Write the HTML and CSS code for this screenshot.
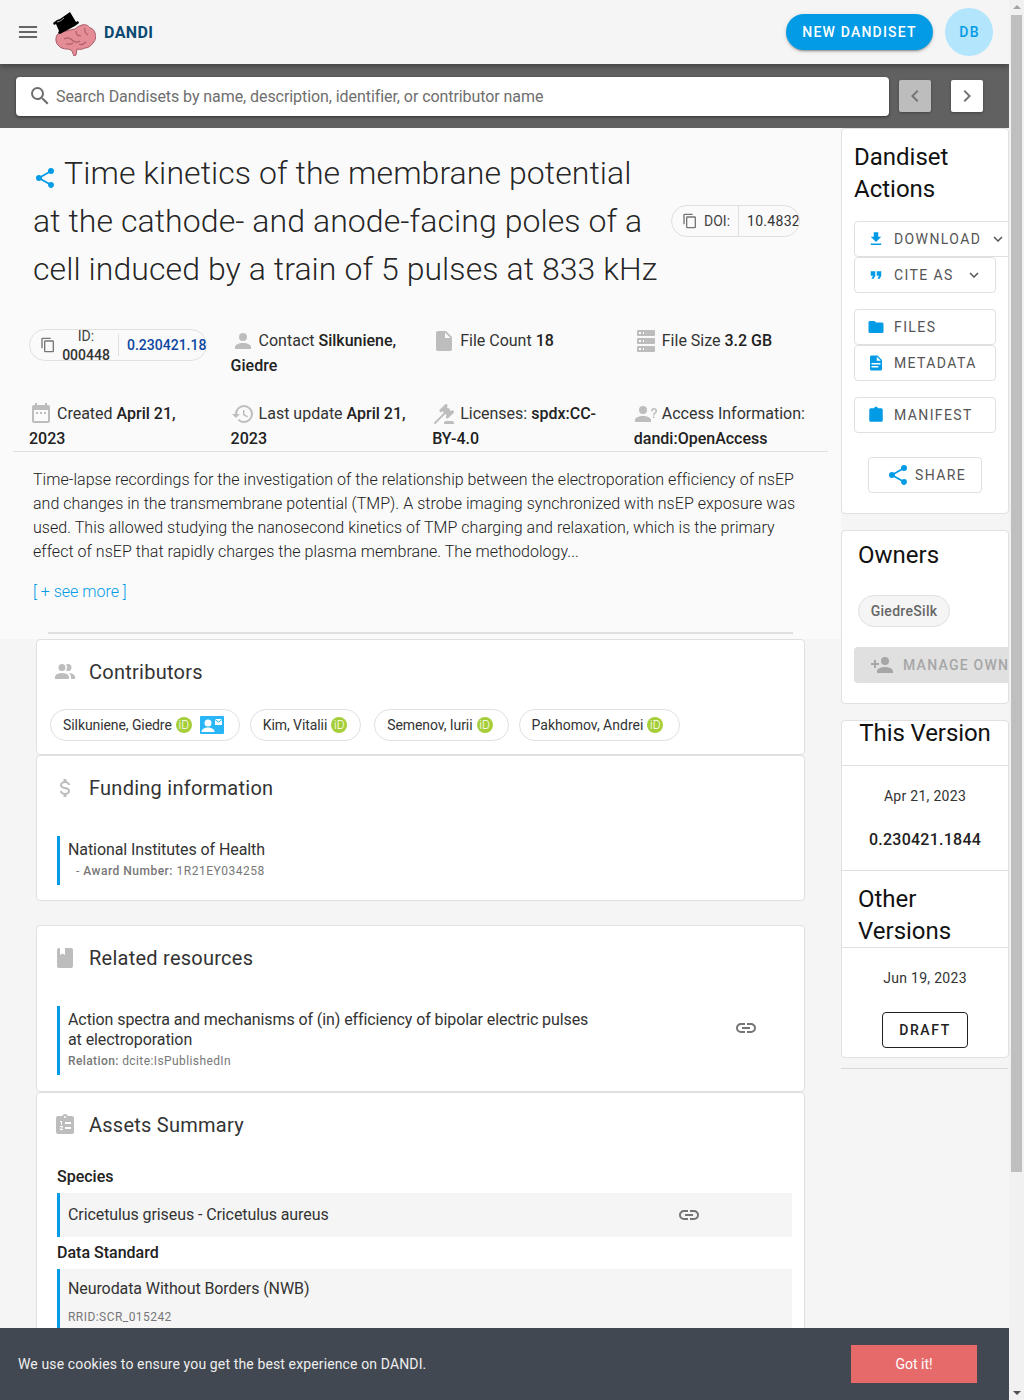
FILE: index.html
```html
<!DOCTYPE html>
<html lang="en">
<head>
  <meta charset="UTF-8" />
  <meta name="viewport" content="width=device-width, initial-scale=1.0" />
  <title>DANDI Archive</title>
  <link rel="stylesheet" href="styles.css">
</head>
<body>
  <!-- Shared icons -->
  <svg class="sprite" aria-hidden="true">
    <symbol id="i-menu" viewBox="0 0 24 24"><path d="M3,6H21V8H3V6M3,11H21V13H3V11M3,16H21V18H3V16Z"/></symbol>
    <symbol id="i-search" viewBox="0 0 24 24"><path d="M9.5,3A6.5,6.5 0 0,1 16,9.5C16,11.11 15.41,12.59 14.44,13.73L14.71,14H15.5L20.5,19L19,20.5L14,15.5V14.71L13.73,14.44C12.59,15.41 11.11,16 9.5,16A6.5,6.5 0 0,1 3,9.5A6.5,6.5 0 0,1 9.5,3M9.5,5C7,5 5,7 5,9.5C5,12 7,14 9.5,14C12,14 14,12 14,9.5C14,7 12,5 9.5,5Z"/></symbol>
    <symbol id="i-left" viewBox="0 0 24 24"><path d="M15.41,16.58L10.83,12L15.41,7.41L14,6L8,12L14,18L15.41,16.58Z"/></symbol>
    <symbol id="i-right" viewBox="0 0 24 24"><path d="M8.59,16.58L13.17,12L8.59,7.41L10,6L16,12L10,18L8.59,16.58Z"/></symbol>
    <symbol id="i-down" viewBox="0 0 24 24"><path d="M7.41,8.58L12,13.17L16.59,8.58L18,10L12,16L6,10L7.41,8.58Z"/></symbol>
    <symbol id="i-share" viewBox="0 0 24 24"><path d="M18,16.08C17.24,16.08 16.56,16.38 16.04,16.85L8.91,12.7C8.96,12.47 9,12.24 9,12C9,11.76 8.96,11.53 8.91,11.3L15.96,7.19C16.5,7.69 17.21,8 18,8A3,3 0 0,0 21,5A3,3 0 0,0 18,2A3,3 0 0,0 15,5C15,5.24 15.04,5.47 15.09,5.7L8.04,9.81C7.5,9.31 6.79,9 6,9A3,3 0 0,0 3,12A3,3 0 0,0 6,15C6.79,15 7.5,14.69 8.04,14.19L15.16,18.34C15.11,18.55 15.08,18.77 15.08,19C15.08,20.61 16.39,21.91 18,21.91C19.61,21.91 20.92,20.61 20.92,19A2.92,2.92 0 0,0 18,16.08Z"/></symbol>
    <symbol id="i-copy" viewBox="0 0 24 24"><path d="M19,21H8V7H19M19,5H8A2,2 0 0,0 6,7V21A2,2 0 0,0 8,23H19A2,2 0 0,0 21,21V7A2,2 0 0,0 19,5M16,1H4A2,2 0 0,0 2,3V17H4V3H16V1Z"/></symbol>
    <symbol id="i-account" viewBox="0 0 24 24"><path d="M12,4A4,4 0 0,1 16,8A4,4 0 0,1 12,12A4,4 0 0,1 8,8A4,4 0 0,1 12,4M12,14C16.42,14 20,15.79 20,18V20H4V18C4,15.79 7.58,14 12,14Z"/></symbol>
    <symbol id="i-file" viewBox="0 0 24 24"><path d="M13,9V3.5L18.5,9M6,2C4.89,2 4,2.89 4,4V20A2,2 0 0,0 6,22H18A2,2 0 0,0 20,20V8L14,2H6Z"/></symbol>
    <symbol id="i-server" viewBox="0 0 24 24"><path d="M4,1H20A1,1 0 0,1 21,2V6A1,1 0 0,1 20,7H4A1,1 0 0,1 3,6V2A1,1 0 0,1 4,1M4,9H20A1,1 0 0,1 21,10V14A1,1 0 0,1 20,15H4A1,1 0 0,1 3,14V10A1,1 0 0,1 4,9M4,17H20A1,1 0 0,1 21,18V22A1,1 0 0,1 20,23H4A1,1 0 0,1 3,22V18A1,1 0 0,1 4,17M9,5H10V3H9V5M9,13H10V11H9V13M9,21H10V19H9V21M5,3V5H7V3H5M5,11V13H7V11H5M5,19V21H7V19H5Z"/></symbol>
    <symbol id="i-calendar" viewBox="0 0 24 24"><path d="M9,10H7V12H9V10M13,10H11V12H13V10M17,10H15V12H17V10M19,3H18V1H16V3H8V1H6V3H5C3.89,3 3,3.9 3,5V19A2,2 0 0,0 5,21H19A2,2 0 0,0 21,19V5A2,2 0 0,0 19,3M19,19H5V8H19V19Z"/></symbol>
    <symbol id="i-history" viewBox="0 0 24 24"><path d="M13.5,8H12V13L16.28,15.54L17,14.33L13.5,12.25V8M13,3A9,9 0 0,0 4,12H1L4.96,16.03L9,12H6A7,7 0 0,1 13,5A7,7 0 0,1 20,12A7,7 0 0,1 13,19C11.07,19 9.32,18.21 8.06,16.94L6.64,18.36C8.27,20 10.5,21 13,21A9,9 0 0,0 22,12A9,9 0 0,0 13,3"/></symbol>
    <symbol id="i-gavel" viewBox="0 0 24 24"><path d="M2.3,20.28L11.9,10.68L10.5,9.26L9.78,9.97C9.39,10.36 8.76,10.36 8.37,9.97L7.66,9.26C7.27,8.87 7.27,8.24 7.66,7.85L13.32,2.19C13.71,1.8 14.34,1.8 14.73,2.19L15.44,2.9C15.83,3.29 15.83,3.92 15.44,4.31L14.73,5L16.15,6.43C16.54,6.04 17.17,6.04 17.56,6.43C17.95,6.82 17.95,7.46 17.56,7.85L18.97,9.26L19.68,8.55C20.07,8.16 20.71,8.16 21.1,8.55L21.8,9.26C22.19,9.65 22.19,10.29 21.8,10.68L16.15,16.33C15.76,16.72 15.12,16.72 14.73,16.33L14.03,15.63C13.63,15.24 13.63,14.6 14.03,14.21L14.73,13.5L13.32,12.09L3.71,21.7C3.32,22.09 2.69,22.09 2.3,21.7C1.91,21.31 1.91,20.67 2.3,20.28M20,19A2,2 0 0,1 22,21V22H12V21A2,2 0 0,1 14,19H20Z"/></symbol>
    <symbol id="i-access" viewBox="0 0 24 24"><path d="M13,8A4,4 0 0,1 9,12A4,4 0 0,1 5,8A4,4 0 0,1 9,4A4,4 0 0,1 13,8M17,18V20H1V18C1,15.79 4.58,14 9,14C13.42,14 17,15.79 17,18M20.5,14.5V16H19V14.5H20.5M18.5,9.5H17V9A3,3 0 0,1 20,6A3,3 0 0,1 23,9C23,9.97 22.5,10.88 21.71,11.41L21.41,11.6C20.84,12 20.5,12.61 20.5,13.3V13.5H19V13.3C19,12.11 19.6,11 20.59,10.35L20.88,10.16C21.27,9.9 21.5,9.47 21.5,9A1.5,1.5 0 0,0 20,7.5A1.5,1.5 0 0,0 18.5,9V9.5Z"/></symbol>
    <symbol id="i-people" viewBox="0 0 24 24"><path d="M16 17V19H2V17S2 13 9 13 16 17 16 17M12.5 7.5A3.5 3.5 0 1 0 9 11A3.5 3.5 0 0 0 12.5 7.5M15.94 13A5.32 5.32 0 0 1 18 17V19H22V17S22 13.37 15.94 13M15 4A3.39 3.39 0 0 0 13.07 4.59A5 5 0 0 1 13.07 10.41A3.39 3.39 0 0 0 15 11A3.5 3.5 0 0 0 15 4Z"/></symbol>
    <symbol id="i-dollar" viewBox="0 0 24 24"><path d="M7,15H9C9,16.08 10.37,17 12,17C13.63,17 15,16.08 15,15C15,13.9 13.96,13.5 11.76,12.97C9.64,12.44 7,11.78 7,9C7,7.21 8.47,5.69 10.5,5.18V3H13.5V5.18C15.53,5.69 17,7.21 17,9H15C15,7.92 13.63,7 12,7C10.37,7 9,7.92 9,9C9,10.1 10.04,10.5 12.24,11.03C14.36,11.56 17,12.22 17,15C17,16.79 15.53,18.31 13.5,18.82V21H10.5V18.82C8.47,18.31 7,16.79 7,15Z"/></symbol>
    <symbol id="i-book" viewBox="0 0 24 24"><path d="M18,22A2,2 0 0,0 20,20V4C20,2.89 19.1,2 18,2H12V9L9.5,7.5L7,9V2H6A2,2 0 0,0 4,4V20A2,2 0 0,0 6,22H18Z"/></symbol>
    <symbol id="i-assets" viewBox="0 0 24 24"><path fill-rule="evenodd" d="M19,3H14.82C14.4,1.84 13.3,1 12,1C10.7,1 9.6,1.84 9.18,3H5A2,2 0 0,0 3,5V19A2,2 0 0,0 5,21H19A2,2 0 0,0 21,19V5A2,2 0 0,0 19,3M12,3A1,1 0 0,1 13,4A1,1 0 0,1 12,5A1,1 0 0,1 11,4A1,1 0 0,1 12,3M12,9H18V11H12V9M12,14H18V16H12V14M7,8H9V12H8V9H7V8M7,13H10V14L8,16H10V17H7V16L9,14H7V13Z"/></symbol>
    <symbol id="i-download" viewBox="0 0 24 24"><path d="M5,20H19V18H5M19,9H15V3H9V9H5L12,16L19,9Z"/></symbol>
    <symbol id="i-quote" viewBox="0 0 24 24"><path d="M14,17H17L19,13V7H13V13H16M6,17H9L11,13V7H5V13H8L6,17Z"/></symbol>
    <symbol id="i-folder" viewBox="0 0 24 24"><path d="M10,4H4C2.89,4 2,4.89 2,6V18A2,2 0 0,0 4,20H20A2,2 0 0,0 22,18V8C22,6.89 21.1,6 20,6H12L10,4Z"/></symbol>
    <symbol id="i-doc" viewBox="0 0 24 24"><path d="M13,9H18.5L13,3.5V9M6,2H14L20,8V20A2,2 0 0,1 18,22H6C4.89,22 4,21.1 4,20V4C4,2.89 4.89,2 6,2M15,18V16H6V18H15M18,14V12H6V14H18Z"/></symbol>
    <symbol id="i-clip" viewBox="0 0 24 24"><path d="M19,3H14.82C14.4,1.84 13.3,1 12,1C10.7,1 9.6,1.84 9.18,3H5A2,2 0 0,0 3,5V19A2,2 0 0,0 5,21H19A2,2 0 0,0 21,19V5A2,2 0 0,0 19,3Z"/></symbol>
    <symbol id="i-addperson" viewBox="0 0 24 24"><path d="M15,14C12.33,14 7,15.33 7,18V20H23V18C23,15.33 17.67,14 15,14M6,10V7H4V10H1V12H4V15H6V12H9V10M15,12A4,4 0 0,0 19,8A4,4 0 0,0 15,4A4,4 0 0,0 11,8A4,4 0 0,0 15,12Z"/></symbol>
    <symbol id="i-link" viewBox="0 0 24 24"><path d="M3.9,12C3.9,10.29 5.29,8.9 7,8.9H11V7H7A5,5 0 0,0 2,12A5,5 0 0,0 7,17H11V15.1H7C5.29,15.1 3.9,13.71 3.9,12M8,13H16V11H8V13M17,7H13V8.9H17C18.71,8.9 20.1,10.29 20.1,12C20.1,13.71 18.71,15.1 17,15.1H13V17H17A5,5 0 0,0 22,12A5,5 0 0,0 17,7Z"/></symbol>
  </svg>

  <div class="page">
    <!-- Top bar -->
    <header class="app-bar">
      <svg class="icon menu-icon"><use href="#i-menu"/></svg>
      <svg class="logo" viewBox="0 0 44 44">
        <path fill="#e58d96" stroke="#a85a66" stroke-width="1" d="M14 19c-3 0-7 1-9 4-2 4-1 8 1 10 2 3 6 4 9 4 2 0 4 1 5 2l2 5 2-1 1-6c3 1 6 0 8-1 3 0 6-2 8-5 3-3 3-7 2-10-1-3-3-5-5-5-2-3-5-4-8-3-3 1-5 2-7 4l-9 2z"/>
        <path fill="none" stroke="#b0606c" stroke-width="1.2" d="M12 27c3-2 6-1 8 1s5 3 8 1M24 19c0 3 2 5 5 5M33 16c-1 3 0 5 3 7M14 32c3 0 5 1 7-1M27 32c2 1 5 0 7-2"/>
        <path fill="#000" d="M1 11l4-3 3-1 10-7 6 10 2-1 1 2-4 3-15 8-2-1 1-2-3-7-2 1z"/>
        <path fill="none" stroke="#ddd" stroke-width=".7" d="M5 10c3-.5 5-2 7-4"/>
      </svg>
      <span class="brand">DANDI</span>
      <span class="spacer"></span>
      <span class="new-btn">NEW DANDISET</span>
      <span class="avatar">DB</span>
    </header>

    <!-- Search -->
    <div class="search-bar">
      <div class="search-box">
        <svg class="icon"><use href="#i-search"/></svg>
        <span>Search Dandisets by name, description, identifier, or contributor name</span>
      </div>
      <span class="nav-btn disabled"><svg class="icon"><use href="#i-left"/></svg></span>
      <span class="nav-btn"><svg class="icon"><use href="#i-right"/></svg></span>
    </div>

    <div class="layout">
      <main class="main-col">
        <section class="hero">
          <div class="title-row">
            <h1 class="title"><svg class="icon title-share"><use href="#i-share"/></svg>Time kinetics of the membrane potential at the cathode- and anode-facing poles of a cell induced by a train of 5 pulses at 833 kHz</h1>
            <div class="chip doi-chip">
              <svg class="icon chip-copy"><use href="#i-copy"/></svg>
              <span class="doi-label">DOI:</span>
              <span class="doi-value">10.48324/dandi.000448/0.230421.1844</span>
            </div>
          </div>

          <div class="meta-grid">
            <div class="meta-cell">
              <div class="chip id-chip">
                <svg class="icon chip-copy"><use href="#i-copy"/></svg>
                <span class="id-label">ID: <b>000448</b></span>
                <span class="id-version">0.230421.1844</span>
              </div>
            </div>
            <div class="meta-cell"><svg class="icon meta-icon"><use href="#i-account"/></svg> Contact <b>Silkuniene, Giedre</b></div>
            <div class="meta-cell"><svg class="icon meta-icon"><use href="#i-file"/></svg> File Count <b>18</b></div>
            <div class="meta-cell"><svg class="icon meta-icon"><use href="#i-server"/></svg> File Size <b>3.2 GB</b></div>
            <div class="meta-cell"><svg class="icon meta-icon"><use href="#i-calendar"/></svg> Created <b>April 21, 2023</b></div>
            <div class="meta-cell"><svg class="icon meta-icon"><use href="#i-history"/></svg> Last update <b>April 21, 2023</b></div>
            <div class="meta-cell"><svg class="icon meta-icon"><use href="#i-gavel"/></svg> Licenses: <b>spdx:CC-BY-4.0</b></div>
            <div class="meta-cell"><svg class="icon meta-icon"><use href="#i-access"/></svg> Access Information: <b>dandi:OpenAccess</b></div>
          </div>

          <p class="description">Time-lapse recordings for the investigation of the relationship between the electroporation efficiency of nsEP and changes in the transmembrane potential (TMP). A strobe imaging synchronized with nsEP exposure was used. This allowed studying the nanosecond kinetics of TMP charging and relaxation, which is the primary effect of nsEP that rapidly charges the plasma membrane. The methodology...</p>
          <a class="see-more">[ + see more ]</a>
          <hr class="hero-line">
        </section>

        <section class="card contributors">
          <h2 class="card-title"><svg class="icon"><use href="#i-people"/></svg>Contributors</h2>
          <div class="chips">
            <span class="person">Silkuniene, Giedre <i class="orcid">iD</i>
              <svg class="mail-card" viewBox="0 0 24 18"><rect width="24" height="18" rx="1" fill="#29b6f6"/><circle cx="8" cy="7" r="3.500" fill="#fff"/><path fill="#fff" d="M1.500 16c0-3 3-4.500 6.500-4.500s6.500 1.500 6.500 4.500z"/><path fill="#fff" d="M15 3h7v6h-7z"/><path fill="none" stroke="#29b6f6" d="M15 3.500l3.500 2.500 3.500-2.500"/></svg>
            </span>
            <span class="person">Kim, Vitalii <i class="orcid">iD</i></span>
            <span class="person">Semenov, Iurii <i class="orcid">iD</i></span>
            <span class="person">Pakhomov, Andrei <i class="orcid">iD</i></span>
          </div>
        </section>

        <section class="card funding">
          <h2 class="card-title"><svg class="icon"><use href="#i-dollar"/></svg>Funding information</h2>
          <div class="item">
            <div class="item-text">National Institutes of Health</div>
            <div class="item-sub award">- <b>Award Number:</b> 1R21EY034258</div>
          </div>
        </section>

        <section class="card related">
          <h2 class="card-title"><svg class="icon"><use href="#i-book"/></svg>Related resources</h2>
          <div class="item item-related">
            <div class="related-body">
              <div class="item-text">Action spectra and mechanisms of (in) efficiency of bipolar electric pulses at electroporation</div>
              <div class="item-sub"><b>Relation:</b> dcite:IsPublishedIn</div>
            </div>
            <svg class="icon link-icon"><use href="#i-link"/></svg>
          </div>
        </section>

        <section class="card assets">
          <h2 class="card-title"><svg class="icon"><use href="#i-assets"/></svg>Assets Summary</h2>
          <h3 class="sub-head">Species</h3>
          <div class="shaded species">
            <span class="item-text">Cricetulus griseus - Cricetulus aureus</span>
            <svg class="icon link-icon"><use href="#i-link"/></svg>
          </div>
          <h3 class="sub-head">Data Standard</h3>
          <div class="shaded standard">
            <div class="item-text">Neurodata Without Borders (NWB)</div>
            <div class="rrid">RRID:SCR_015242</div>
          </div>
        </section>
      </main>

      <aside class="side-col">
        <section class="side-card actions">
          <h2 class="side-title">Dandiset Actions</h2>
          <div class="act-btn wide"><svg class="icon"><use href="#i-download"/></svg><span>DOWNLOAD</span><svg class="icon caret"><use href="#i-down"/></svg></div>
          <div class="act-btn"><svg class="icon"><use href="#i-quote"/></svg><span>CITE AS</span><svg class="icon caret"><use href="#i-down"/></svg></div>
          <div class="act-btn gap-top"><svg class="icon"><use href="#i-folder"/></svg><span>FILES</span></div>
          <div class="act-btn"><svg class="icon"><use href="#i-doc"/></svg><span>METADATA</span></div>
          <div class="act-btn gap-top"><svg class="icon"><use href="#i-clip"/></svg><span>MANIFEST</span></div>
          <div class="act-btn share-btn"><svg class="icon"><use href="#i-share"/></svg><span>SHARE</span></div>
        </section>

        <section class="side-card owners">
          <h2 class="owners-title">Owners</h2>
          <span class="owner-chip">GiedreSilk</span>
          <div class="manage-btn"><svg class="icon"><use href="#i-addperson"/></svg><span>MANAGE OWNERS</span></div>
        </section>

        <section class="side-card versions">
          <h2 class="version-head">This Version</h2>
          <div class="version-body">
            <div class="version-date">Apr 21, 2023</div>
            <div class="version-num">0.230421.1844</div>
          </div>
          <h2 class="other-head">Other Versions</h2>
          <div class="other-body">
            <div class="version-date">Jun 19, 2023</div>
            <span class="draft-btn">DRAFT</span>
          </div>
        </section>
        <hr class="side-line">
      </aside>
    </div>

    <!-- Cookie notice, pinned over the page -->
    <div class="cookie">
      <span>We use cookies to ensure you get the best experience on DANDI.</span>
      <span class="cookie-btn">Got it!</span>
    </div>
  </div>

  <!-- Window scrollbar -->
  <div class="scrollbar">
    <span class="arrow up"></span>
    <span class="thumb"></span>
    <span class="arrow down"></span>
  </div>
</body>
</html>
```

FILE: styles.css
```css
* {
  box-sizing: border-box;
}
html, body {
  margin: 0;
  height: 1400px;
  overflow: hidden;
}
body {
  font-family: Roboto, "Liberation Sans", sans-serif;
  font-size: 16px;
  color: rgba(0, 0, 0, 0.87);
  background: #f5f5f5;
}
h1, h2, h3, p {
  margin: 0;
  font-weight: 400;
}
.sprite {
  display: none;
}
.icon {
  width: 24px;
  height: 24px;
  flex: none;
  fill: currentColor;
}
.page {
  position: relative;
  width: 1009px;
  height: 1400px;
  overflow: hidden;
}

/* top bar */
.app-bar {
  position: relative;
  z-index: 2;
  display: flex;
  align-items: center;
  height: 64px;
  padding: 0 16px;
  background: #f5f5f5;
  box-shadow: 0 2px 4px -1px rgba(0,0,0,.2), 0 4px 5px 0 rgba(0,0,0,.14);
}
.menu-icon {
  color: #666;
}
.logo {
  width: 44px;
  height: 44px;
  margin: 3px 0 0 12px;
}
.brand {
  margin-left: 8px;
  font-size: 16px;
  font-weight: 700;
  letter-spacing: 0.4px;
  color: #0a4a73;
}
.spacer {
  flex: 1;
}
.new-btn {
  display: flex;
  align-items: center;
  justify-content: center;
  width: 147px;
  height: 36px;
  border-radius: 18px;
  background: #039be5;
  color: #fff;
  font-size: 14px;
  font-weight: 500;
  letter-spacing: 1.2px;
  box-shadow: 0 3px 1px -2px rgba(0,0,0,.2), 0 2px 2px 0 rgba(0,0,0,.14), 0 1px 5px 0 rgba(0,0,0,.12);
}
.avatar {
  display: flex;
  align-items: center;
  justify-content: center;
  width: 48px;
  height: 48px;
  margin-left: 12px;
  padding-left: 1px;
  border-radius: 50%;
  background: #b3e5fc;
  color: #039be5;
  font-size: 14px;
  font-weight: 500;
  letter-spacing: 1.25px;
}

/* search */
.search-bar {
  display: flex;
  align-items: center;
  height: 64px;
  padding: 0 26px 0 16px;
  background: #616161;
}
.search-box {
  display: flex;
  align-items: center;
  gap: 4px;
  flex: 1;
  height: 39px;
  padding: 0 12px;
  background: #fff;
  border-radius: 4px;
  color: #6e6e6e;
  letter-spacing: -0.07px;
  box-shadow: 0 1px 3px rgba(0,0,0,.5);
}
.nav-btn {
  display: flex;
  align-items: center;
  justify-content: center;
  width: 32px;
  height: 32px;
  margin-left: 10px;
  background: #fff;
  border-radius: 2px;
  color: #757575;
  box-shadow: 0 1px 3px rgba(0,0,0,.3);
}
.nav-btn + .nav-btn {
  margin-left: 20px;
}
.nav-btn.disabled {
  background: #bdbdbd;
}

.layout {
  display: flex;
}
.main-col {
  width: 841px;
  flex: none;
}

/* hero */
.hero {
  height: 511px;
  padding-top: 21px;
  background: #fafafa;
  border-radius: 4px 4px 0 0;
}
.title-row {
  display: flex;
  align-items: center;
  padding-left: 33px;
}
.title {
  width: 630px;
  flex: none;
  font-size: 32px;
  font-weight: 300;
  line-height: 48px;
  letter-spacing: 0.07px;
}
.title-share {
  margin: 0 7px 0 0;
  vertical-align: -6px;
  color: #039be5;
}
.chip {
  display: flex;
  align-items: center;
  height: 32px;
  border: 1px solid #e0e0e0;
  border-radius: 16px;
  font-size: 14px;
}
.chip-copy {
  width: 16px;
  height: 16px;
  color: #757575;
}
.doi-chip {
  width: 129px;
  margin-left: 8px;
  padding-left: 10px;
  overflow: hidden;
  white-space: nowrap;
}
.doi-label {
  margin-left: 6px;
  padding-right: 8px;
  border-right: 1px solid #e0e0e0;
  line-height: 30px;
  color: #444;
}
.doi-value {
  margin-left: 8px;
  letter-spacing: 0.3px;
  color: #333;
}
.meta-grid {
  display: grid;
  grid-template-columns: repeat(4, 201.6px);
  grid-auto-rows: 73px;
  margin: 35px 13px 0;
  padding-left: 16px;
  border-bottom: 1px solid #e0e0e0;
  height: 124px;
  line-height: 25px;
  color: #333;
}
.meta-grid b {
  font-weight: 500;
  color: #212121;
}
.meta-cell {
  padding-right: 22px;
}
.meta-icon {
  vertical-align: -7px;
  color: #bdbdbd;
}
.id-chip {
  width: 178px;
  margin-top: 1px;
  padding-left: 10px;
  white-space: nowrap;
}
.id-label {
  flex: none;
  width: 48px;
  margin: 2px 0 0 6px;
  line-height: 19px;
  white-space: normal;
  text-align: center;
  color: #444;
}
.id-label b {
  color: #333;
}
.id-version {
  min-width: 0;
  flex: 1;
  margin-left: 8px;
  padding-left: 8px;
  border-left: 1px solid #e0e0e0;
  overflow: hidden;
  line-height: 22px;
  font-weight: 500;
  color: #0d47a1;
}
.description {
  margin: 16px 33px 0;
  line-height: 24px;
  font-weight: 300;
  letter-spacing: 0.04px;
  color: #212121;
}
.see-more {
  display: block;
  margin: 16px 33px 0;
  line-height: 24px;
  font-weight: 300;
  color: #039be5;
}
.hero-line {
  margin: 28px 48px 0;
  border: 0;
  border-top: 2px solid #e0e0e0;
}

/* cards */
.card {
  width: 769px;
  margin-left: 36px;
  background: #fff;
  border: 1px solid #e0e0e0;
  border-radius: 4px;
}
.card-title {
  display: flex;
  align-items: center;
  gap: 12px;
  padding: 12px 0 0 16px;
  height: 52px;
  font-size: 20px;
  letter-spacing: 0.25px;
  color: #333;
}
.card-title .icon {
  color: #bdbdbd;
}
.contributors {
  height: 116px;
}
.chips {
  display: flex;
  gap: 10px;
  margin: 17px 0 0 13px;
}
.person {
  display: flex;
  align-items: center;
  gap: 4px;
  height: 32px;
  padding: 0 15px 0 12px;
  border: 1px solid #e0e0e0;
  border-radius: 16px;
  font-size: 14px;
  letter-spacing: -0.08px;
  color: #333;
  white-space: nowrap;
}
.person:nth-child(2) {
  padding-right: 13px;
  margin-right: 3px;
}
.person:last-child {
  padding-right: 16px;
  letter-spacing: 0;
}
.orcid {
  display: flex;
  align-items: center;
  justify-content: center;
  width: 16px;
  height: 16px;
  border-radius: 50%;
  background: #a6ce39;
  color: #fff;
  font-size: 12px;
  font-weight: 300;
  font-style: normal;
}
.mail-card {
  width: 24px;
  height: 18px;
  margin-left: 4px;
}
.funding {
  height: 146px;
  margin-bottom: 24px;
}
.related {
  height: 167px;
}
.assets {
  height: 300px;
}
.item {
  margin: 28px 0 0 20px;
  padding-left: 8px;
  border-left: 3px solid #039be5;
}
.funding .item {
  height: 49px;
  padding-top: 4px;
}
.item-text {
  line-height: 20px;
  letter-spacing: -0.09px;
  color: #333;
}
.item-sub {
  margin-top: 1px;
  font-size: 12px;
  line-height: 20px;
  letter-spacing: 0.5px;
  color: #777;
}
.award {
  padding-left: 8px;
}
.item-sub b {
  font-weight: 500;
}
.item-related {
  display: flex;
  height: 69px;
  padding-top: 4px;
}
.item-related .item-sub {
  letter-spacing: 0.4px;
}
.related-body {
  width: 530px;
}
.item-related .link-icon {
  margin: 6px 0 0 136px;
}
.link-icon {
  color: #757575;
}
.sub-head {
  margin: 20px 0 0 20px;
  font-size: 16px;
  font-weight: 500;
  line-height: 24px;
  color: #212121;
}
.shaded {
  width: 735px;
  margin: 4px 0 0 20px;
  padding-left: 8px;
  border-left: 3px solid #039be5;
  background: #f5f5f5;
}
.species {
  display: flex;
  align-items: center;
  justify-content: space-between;
  height: 44px;
  padding-right: 91px;
}
.assets .species + .sub-head {
  margin-top: 4px;
}
.standard {
  height: 90px;
  padding-top: 10px;
}
.rrid {
  margin-top: 8px;
  font-size: 12px;
  line-height: 20px;
  letter-spacing: 0.45px;
  color: #777;
}

/* right column */
.side-col {
  width: 168px;
  flex: none;
}
.side-card {
  background: #fff;
  border: 1px solid #e0e0e0;
  border-radius: 4px;
  overflow: hidden;
}
.actions {
  height: 386px;
  padding: 12px 0 0 12px;
}
.side-title {
  padding-right: 30px;
  font-size: 24px;
  line-height: 32px;
  color: #111;
}
.act-btn {
  display: flex;
  align-items: center;
  width: 142px;
  height: 36px;
  padding-left: 12px;
  border: 1px solid #e0e0e0;
  border-radius: 4px;
  background: #fff;
  font-size: 14px;
  letter-spacing: 1.4px;
  color: #555;
}
.side-title + .act-btn {
  margin-top: 16px;
}
.act-btn .icon {
  width: 18px;
  height: 18px;
  margin-right: 9px;
  color: #039be5;
}
.act-btn .caret {
  margin: 0 0 0 auto;
  color: #555;
  position: relative;
  right: 12px;
}
.wide {
  width: 168px;
}
.wide .caret {
  right: 14px;
}
.gap-top {
  margin-top: 16px;
}
.share-btn {
  width: 114px;
  margin: 24px 0 0 14px;
  padding-left: 17px;
}
.share-btn .icon {
  width: 24px;
  height: 24px;
  margin-right: 5px;
}
.owners {
  height: 174px;
  margin-top: 16px;
  padding: 8px 0 0 16px;
}
.owners-title {
  font-size: 24px;
  line-height: 32px;
  color: #111;
}
.owner-chip {
  display: flex;
  align-items: center;
  justify-content: center;
  width: 92px;
  height: 32px;
  margin-top: 24px;
  background: #f5f5f5;
  border: 1px solid #e0e0e0;
  border-radius: 16px;
  font-size: 14px;
  font-weight: 500;
  letter-spacing: 0.3px;
  color: #666;
}
.manage-btn {
  display: flex;
  align-items: center;
  width: 180px;
  height: 36px;
  margin: 20px 0 0 -4px;
  padding-left: 16px;
  background: #e0e0e0;
  border-radius: 4px;
  font-size: 14px;
  font-weight: 500;
  letter-spacing: 1.25px;
  color: #a6a6a6;
  white-space: nowrap;
}
.manage-btn .icon {
  margin-right: 9px;
}
.versions {
  height: 338px;
  margin-top: 16px;
}
.version-head {
  height: 45px;
  border-bottom: 1px solid #e0e0e0;
  font-size: 24px;
  line-height: 25px;
  letter-spacing: -0.1px;
  text-align: center;
  color: #111;
}
.version-body {
  height: 105px;
  padding-top: 20px;
  border-bottom: 1px solid #e0e0e0;
  text-align: center;
}
.version-date {
  font-size: 14px;
  line-height: 20px;
  letter-spacing: 0.3px;
  color: #333;
  text-align: center;
}
.version-num {
  margin-top: 24px;
  line-height: 20px;
  font-weight: 500;
  letter-spacing: 0.25px;
  color: #212121;
}
.other-head {
  height: 77px;
  padding: 12px 20px 0 16px;
  border-bottom: 1px solid #e0e0e0;
  font-size: 24px;
  line-height: 32px;
  color: #111;
}
.other-body {
  padding-top: 20px;
  text-align: center;
}
.draft-btn {
  display: inline-flex;
  align-items: center;
  justify-content: center;
  width: 86px;
  height: 36px;
  margin-top: 24px;
  border: 1px solid #212121;
  border-radius: 4px;
  font-size: 14px;
  font-weight: 500;
  letter-spacing: 1.6px;
  color: #212121;
}
.side-line {
  width: 167px;
  margin: 10px 0 0;
  border: 0;
  border-top: 1px solid #d8d8d8;
}

/* cookie notice */
.cookie {
  position: absolute;
  left: 0;
  right: 0;
  bottom: 0;
  display: flex;
  align-items: center;
  justify-content: space-between;
  height: 72px;
  padding: 0 32px 0 18px;
  background: #424851;
  color: #eee;
  font-size: 14px;
  letter-spacing: 0.13px;
}
.cookie-btn {
  display: flex;
  align-items: center;
  justify-content: center;
  width: 126px;
  height: 38px;
  background: #e76a6a;
  color: #fff;
  letter-spacing: 0;
}

/* scrollbar */
.scrollbar {
  position: absolute;
  top: 0;
  right: 0;
  width: 15px;
  height: 1400px;
  background: #f1f1f1;
}
.thumb {
  position: absolute;
  top: 15px;
  left: 2px;
  width: 11px;
  height: 1157px;
  background: #bfbfbf;
}
.arrow {
  position: absolute;
  left: 4px;
  border-left: 4px solid transparent;
  border-right: 4px solid transparent;
}
.arrow.up {
  top: 5px;
  border-bottom: 4px solid #a3a3a3;
}
.arrow.down {
  bottom: 5px;
  border-top: 4px solid #505050;
}
```
